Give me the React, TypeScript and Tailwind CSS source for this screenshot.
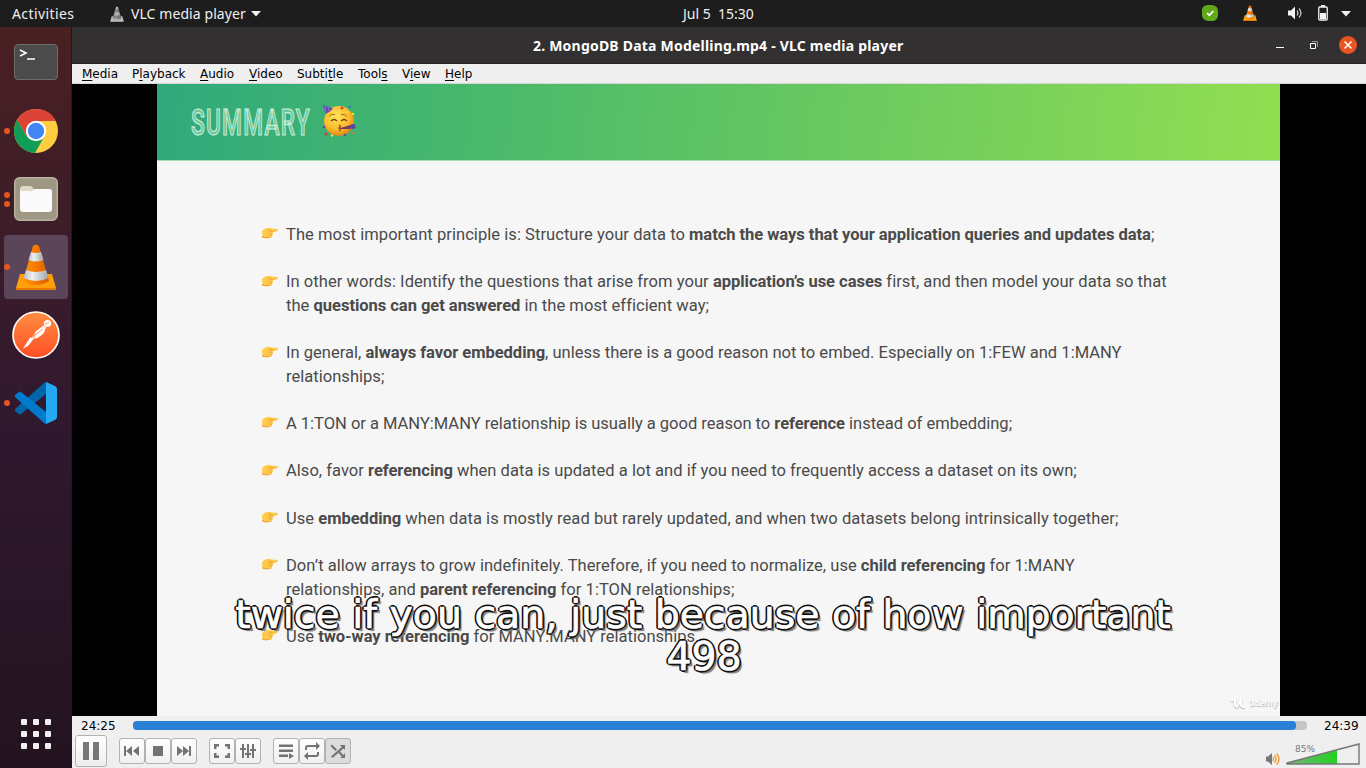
import React from "react";

const menu: [string, string, string][] = [
  ["", "M", "edia"], ["P", "l", "ayback"], ["", "A", "udio"], ["", "V", "ideo"],
  ["Subti", "t", "le"], ["Tool", "s", ""], ["V", "i", "ew"], ["", "H", "elp"],
];
const menuWidths = ["w-[50px]", "w-[68px]", "w-[49px]", "w-[48px]", "w-[61px]", "w-[44px]", "w-[43px]", "w-[40px]"];

function Cone({ gray = false, className }: { gray?: boolean; className: string }) {
  const o = gray ? "#b5b5b5" : "#f57900";
  const d = gray ? "#858585" : "#d85c00";
  return (
    <svg viewBox="0 0 42 48" className={className}>
      <defs>
        <linearGradient id={gray ? "cg" : "co"} x1="0" x2="1"><stop offset="0" stopColor={gray ? "#999" : "#ff9800"} /><stop offset=".5" stopColor={o} /><stop offset="1" stopColor={d} /></linearGradient>
        <linearGradient id={gray ? "wg" : "wo"} x1="0" x2="1"><stop offset="0" stopColor={gray ? "#777" : "#b9bdc0"} /><stop offset=".35" stopColor={gray ? "#888" : "#eef0f1"} /><stop offset="1" stopColor={gray ? "#666" : "#a2a6a8"} /></linearGradient>
      </defs>
      <path d="M5 31h32l4 14v2H1v-2z" fill={gray ? "#bbb" : "#ff9f0a"} />
      <path d="M1 45h40v2H1z" fill={gray ? "#999" : "#e87800"} />
      <path d="M18 3Q21 0 24 3L34 38Q21 46 8 38z" fill={gray ? "url(#cg)" : "url(#co)"} />
      <path d="M16 9Q21 11 26 9L28.5 17Q21 20 13.500 17z" fill={gray ? "url(#wg)" : "url(#wo)"} />
      <path d="M11 27Q21 31 31 27L33.500 35Q21 41 8.500 35z" fill={gray ? "url(#wg)" : "url(#wo)"} />
    </svg>
  );
}

function Hand() {
  return (
    <svg viewBox="0 0 18 14" className="h-[14px] w-[18px] shrink-0">
      <path d="M1 5C3 3.500 5 2 7 1.800L10.500 2.600l6 .5q1.300 1-.2 2l-4.600.8.4 1.600-.7 1.900-1.100 1.700-4.300.9L1.500 11z" fill="#ffc94a" />
      <path d="M1 10l4 1.300 5-.2 1-1-.6 1.500-5 .9-4-.8zM9.500 3.200l-2.500 2 4 .5 5.500-.6-6-.4z" fill="#eda636" />
      <path d="M7.500 7.200h4M7.500 9.200h3.500" stroke="#e0a134" strokeWidth=".6" />
    </svg>
  );
}

function Party() {
  return (
    <svg viewBox="0 0 34 34" className="relative -top-px h-[34px] w-[34px]">
      <defs><radialGradient id="face" cx=".42" cy=".35" r=".65"><stop offset="0" stopColor="#ffe45a" /><stop offset=".65" stopColor="#fdbb2c" /><stop offset="1" stopColor="#e38613" /></radialGradient></defs>
      <circle cx="17" cy="17" r="15" fill="url(#face)" />
      <path d="M1 1l10 3.500Q8 8 3.500 10z" fill="#6747b5" /><path d="M3 2l1 7M6 3l1 4" stroke="#9a79dd" strokeWidth=".8" />
      <path d="M7 12.500q2-3 6-2M19 10.500q4-1 6 2" stroke="#a86a18" fill="none" strokeWidth="1" />
      <path d="M9 17q3-3 6 0M19 17q3-3 6 0" stroke="#6e4010" fill="none" strokeWidth="1.200" />
      <path d="M17 21q3 1 0 3q3 1 0 3" stroke="#84420d" fill="none" strokeWidth="1.200" />
      <path d="M18 24l11-3v4l-11 0z" fill="#713d66" /><circle cx="31" cy="22.500" r="2.500" fill="#5a48a5" />
      <circle cx="20" cy="4" r="1.500" fill="#e83c47" /><circle cx="28" cy="3" r="1.200" fill="#3275c9" /><circle cx="31" cy="10" r="1.300" fill="#e5dc35" /><circle cx="25" cy="8" r="1" fill="#efda51" />
      <circle cx="2" cy="23" r="1.300" fill="#6046a9" /><circle cx="4" cy="30" r="1.500" fill="#dc3448" /><circle cx="10" cy="31.500" r="1.200" fill="#f2da44" /><circle cx="23" cy="31" r="1.300" fill="#5c51a8" /><circle cx="30" cy="29" r="1.200" fill="#f26747" />
    </svg>
  );
}

function Dock({ dots = 0, active = false, children }: { dots?: number; active?: boolean; children: React.ReactNode }) {
  return (
    <div className={`relative ml-1 mt-1 flex h-16 w-16 shrink-0 items-center justify-center rounded-[4px] ${active ? "bg-[#5a4658]" : ""}`}>
      <div className="absolute left-0 top-0 flex h-16 w-[6px] flex-col items-center justify-center gap-[3px]">
        {Array.from({ length: dots }).map((_, i) => <i key={i} className="h-[6px] w-[6px] rounded-full bg-[#e95420]" />)}
      </div>
      {children}
    </div>
  );
}

function Btn({ on = false, children }: { on?: boolean; children: React.ReactNode }) {
  return (
    <button className={`flex h-[26px] w-[26px] items-center justify-center rounded-[3px] border border-[#b2b2b2] ${on ? "bg-[#dcdcdc]" : "bg-linear-to-b from-[#fefefe] to-[#f0f0f0]"}`}>
      <svg viewBox="0 0 18 18" className="h-[18px] w-[18px] shrink-0" fill="#737373">{children}</svg>
    </button>
  );
}

function B({ children }: { children: React.ReactNode }) {
  return <b className="font-bold tracking-[-0.045px]">{children}</b>;
}

function Item({ lines }: { lines: React.ReactNode[] }) {
  return (
    <div className="mb-[23.650px] flex">
      <div className="mr-[7px] flex h-[23.650px] items-center pb-[3px]"><Hand /></div>
      <div>{lines.map((l, i) => <p key={i} className="h-[23.650px] whitespace-nowrap leading-[23.650px]">{l}</p>)}</div>
    </div>
  );
}

const items: React.ReactNode[][] = [
  [<>The most important principle is: Structure your data to <B>match the ways that your application queries and updates data</B>;</>],
  [<>In other words: Identify the questions that arise from your <B>application’s use cases</B> first, and then model your data so that</>, <>the <B>questions can get answered</B> in the most efficient way;</>],
  [<>In general, <B>always favor embedding</B>, unless there is a good reason not to embed. Especially on 1:FEW and 1:MANY</>, <>relationships;</>],
  [<>A 1:TON or a MANY:MANY relationship is usually a good reason to <B>reference</B> instead of embedding;</>],
  [<>Also, favor <B>referencing</B> when data is updated a lot and if you need to frequently access a dataset on its own;</>],
  [<>Use <B>embedding</B> when data is mostly read but rarely updated, and when two datasets belong intrinsically together;</>],
  [<>Don’t allow arrays to grow indefinitely. Therefore, if you need to normalize, use <B>child referencing</B> for 1:MANY</>, <>relationships, and <B>parent referencing</B> for 1:TON relationships;</>],
  [<>Use <B>two-way referencing</B> for MANY:MANY relationships.</>],
];
const itemTracking = ["tracking-[0.045px]", "tracking-[0.045px]", "tracking-[0.015px]", "tracking-[-0.020px]", "tracking-[0.025px]", "tracking-[0.050px]", "tracking-[0.025px]", "tracking-[0.005px]"];

export default function App() {
  return (
    <div className="flex h-[768px] w-[1366px] flex-col overflow-hidden bg-black font-['Noto_Sans',sans-serif]">
      <header className="flex h-[27px] shrink-0 items-center bg-[#1d1d1d] text-[14px] text-[#f0f0f0]">
        <span className="ml-3 w-[97px] whitespace-nowrap tracking-[0.400px]">Activities</span>
        <Cone gray className="h-[16px] w-[16px]" />
        <span className="ml-[6px] w-[120px] whitespace-nowrap tracking-[0.080px]">VLC media player</span>
        <svg viewBox="0 0 10 6" className="h-[6px] w-[10px]" fill="#f0f0f0"><path d="M0 0h10L5 5.500z" /></svg>
        <span className="ml-[422px] w-[519px] whitespace-pre pb-px text-[14px]">Jul 5  15:30</span>
        <svg viewBox="0 0 16 16" className="-mt-px h-4 w-4"><path d="M5 0h5q6 1 6 6v5q-1 5-6 5H6q-6-1-6-6V5q0-4 5-5z" fill="#5fa81a" /><path d="M5 8l2.300 2.300L11.500 6" fill="none" stroke="#fff" strokeWidth="1.700" /></svg>
        <Cone className="ml-[24px] h-[16px] w-[16px] -mt-px" />
        <svg viewBox="0 0 16 14" className="ml-[30px] h-[14px] w-[16px] -mt-px"><path d="M0 4.500h3l4-4v13l-4-4H0z" fill="#f2f2f2" /><path d="M9 4.500q2 2.500 0 5M11 2.500q4 4.500 0 9" stroke="#ccc" fill="none" strokeWidth="1.200" /></svg>
        <svg viewBox="0 0 10 16" className="ml-[14px] h-4 w-[10px] -mt-px"><path d="M3 0h4v2H3z" fill="#f2f2f2" /><rect x=".75" y="2" width="8.500" height="13" rx="1" fill="none" stroke="#f2f2f2" strokeWidth="1.300" /><path d="M2 8h6v6H2z" fill="#f2f2f2" /></svg>
        <svg viewBox="0 0 10 6" className="ml-[13px] h-[6px] w-[10px]" fill="#f0f0f0"><path d="M0 0h10L5 5.500z" /></svg>
      </header>
      <div className="flex h-[741px]">
        <aside className="flex w-[72px] shrink-0 flex-col border-r border-[#26131f] bg-linear-to-b from-[#4a2021] via-[#2f182e] via-55% to-[#23131f]">
          <Dock>
            <div className="flex h-9 w-11 -translate-y-px items-start rounded-[4px] border border-[#6c6c6c] bg-[#4b4b4b]">
              <svg viewBox="0 0 42 34" className="h-[34px] w-[42px]" fill="none" stroke="#fff" strokeWidth="1.600"><path d="M5 5l6 3-6 3M12 14h8" /></svg>
            </div>
          </Dock>
          <Dock dots={1}>
            <svg viewBox="0 0 44 44" className="h-11 w-11"><circle cx="22" cy="22" r="22" fill="#ffcd40" /><path d="M22 12h19.600L39 8q-5-8-17-8Q10 0 3 11l10 17z" fill="#db4437" /><path d="M3 11l10 17 9 3 8-3-9 16A22 22 0 0 1 3 11z" fill="#109d58" /><circle cx="22" cy="22" r="10.200" fill="#fff" /><circle cx="22" cy="22" r="8.200" fill="#4285f4" /></svg>
          </Dock>
          <Dock dots={2}>
            <svg viewBox="0 0 44 44" className="h-11 w-11"><rect x=".7" y=".7" width="42.600" height="42.600" rx="5" fill="#9e9783" stroke="#bab49f" strokeWidth="1.400" /><path d="M6 12q0-3 3-3h8l3 3h15q3 0 3 3v5H6z" fill="#ddd9c9" /><path d="M6 14h12l3-2h14q3 0 3 3v17q0 3-3 3H9q-3 0-3-3z" fill="#fafafa" /></svg>
          </Dock>
          <Dock dots={1} active><Cone className="h-[48px] w-[42px]" /></Dock>
          <Dock>
            <svg viewBox="0 0 48 48" className="h-12 w-12"><defs><linearGradient id="pm" x2="0" y2="1"><stop stopColor="#ff8e42" /><stop offset="1" stopColor="#ff4e25" /></linearGradient></defs><circle cx="24" cy="24" r="23" fill="url(#pm)" stroke="#fff" strokeWidth="1.700" /><circle cx="35.500" cy="12.500" r="3.600" fill="#fff" /><path d="M31.500 14.500l2.500 2-2.500 6-6 4.500-6.500 1.500L23 21zM18.500 26l3.500 1.500-6 7.500-5 2.500 2-3z" fill="#fff" /><path d="M19 27l12-9M23 21l-1 7M33 13l4-1.500" stroke="#ff763b" strokeWidth=".8" /></svg>
          </Dock>
          <Dock dots={1}>
            <svg viewBox="0 0 42 42" className="h-[42px] w-[42px]"><path d="M0 27l29-26 2-1v12L6 32q-1 1-2 0l-4-3q-1-1 0-2z" fill="#0065a9" /><path d="M0 15l29 26 2 1V30L6 10q-1-1-2 0l-4 3q-1 1 0 2z" fill="#007acc" /><path d="M31 0l9 4q2 1 2 3v28q0 2-2 3l-9 4z" fill="#24a9f2" /></svg>
          </Dock>
          <div className="ml-[21px] mt-[284px] grid w-[30px] grid-cols-3 gap-[6px]">
            {Array.from({ length: 9 }).map((_, i) => <i key={i} className="h-[6px] w-[6px] rounded-[1px] bg-[#f2f0ee]" />)}
          </div>
        </aside>
        <main className="flex w-[1294px] flex-col bg-[#efefef]">
          <div className="flex h-[37px] shrink-0 items-center border-b border-[#252323] bg-[#323031] text-white">
            <h1 className="ml-[461px] w-[742px] whitespace-nowrap pt-px text-[14px] font-bold tracking-[0.210px]">2. MongoDB Data Modelling.mp4 - VLC media player</h1>
            <svg viewBox="0 0 82 18" className="h-[18px] w-[82px]"><path d="M1 11.500h8" stroke="#fff" /><path d="M35.500 7.500h5v5h-5z" fill="none" stroke="#fff" /><path d="M37 5.500h5.500V11" fill="none" stroke="#999" /><circle cx="73" cy="9" r="9" fill="#e95420" /><path d="M69.500 5.500l7 7m0-7l-7 7" stroke="#fff" strokeWidth="1.500" /></svg>
          </div>
          <nav className="flex h-5 shrink-0 items-center border-b border-[#d6d6d6] pl-[10px] font-['DejaVu_Sans',sans-serif] text-[12px] text-black">
            {menu.map((m, i) => <span key={i} className={`${menuWidths[i]} whitespace-nowrap`}>{m[0]}<u className="underline-offset-2">{m[1]}</u>{m[2]}</span>)}
          </nav>
          <div className="h-[632px] shrink-0 bg-black pl-[85px] pr-[86px]">
            <section className="relative h-[632px] bg-[#f6f6f6]">
              <div className="flex h-[77px] items-center border-b border-[#a9dfb5] bg-[linear-gradient(97deg,#30a97c,#48b86c_28%,#92de51)] pl-[33px]">
                <svg viewBox="0 0 120 40" className="mr-[12px] h-[40px] w-[120px] overflow-visible"><text x="1" y="32.500" textLength="120" lengthAdjust="spacingAndGlyphs" className="fill-[#6cc89d] stroke-[#cdeedb] stroke-[1.2px] font-['Roboto',sans-serif] text-[36px] font-medium tracking-[2px]">SUMMARY</text></svg>
                <Party />
              </div>
              <div className="pl-[104px] pt-[62px] font-['Roboto',sans-serif] text-[16.550px] text-[#4a4a4a]">
                {items.map((l, i) => <div key={i} className={itemTracking[i]}><Item lines={l} /></div>)}
              </div>
              <div className="absolute left-0 top-[509px] w-[1092px] whitespace-nowrap text-center font-['DejaVu_Sans',sans-serif] text-[39.400px] leading-[42px] text-white [-webkit-text-stroke:0.700px_#fff] [text-shadow:2px_0_0_#111,-2px_0_0_#111,0_2px_0_#111,0_-2px_0_#111,1.400px_1.400px_0_#111,-1.400px_1.400px_0_#111,1.400px_-1.400px_0_#111,-1.400px_-1.400px_0_#111,3px_3px_1px_#777]">
                <p>twice if you can, just because of how important</p><p className="pl-[2px]">498</p>
              </div>
              <div className="absolute bottom-[6px] right-[3px] flex items-center gap-[2px] text-[9px] font-bold text-[#fafafa] [text-shadow:1px_1px_1px_#bbb]">
                <svg viewBox="0 0 16 14" className="h-[14px] w-4"><path d="M1 6q4-4 4 0v4q2 5 6-7v6q0 3 4 3" stroke="#ccc" strokeWidth="3" fill="none" /><path d="M1 5q4-4 4 0v4q2 5 6-7v6q0 3 4 3" stroke="#fff" strokeWidth="2" fill="none" /></svg><span className="tracking-[-0.600px]">Udemy</span>
              </div>
            </section>
          </div>
          <footer className="h-[52px] font-['DejaVu_Sans',sans-serif] text-[12px] text-black">
            <div className="flex h-[18px] items-center pl-[9px]">
              <span className="w-[52px] pt-[2px]">24:25</span>
              <div className="h-[9px] w-[1174px] rounded-[4px] bg-[#c6c6c6]"><div className="h-full w-[1163px] rounded-[4px] bg-[#2980d4]" /></div>
              <span className="ml-[17px] pt-[2px]">24:39</span>
            </div>
            <div className="flex h-[34px] items-center pl-[3px]">
              <button className="flex h-8 w-8 items-center justify-center gap-1 rounded-[3px] border border-[#b2b2b2] bg-linear-to-b from-white to-[#eeeeee]"><i className="h-[18px] w-[6px] bg-[#777]" /><i className="h-[18px] w-[6px] bg-[#777]" /></button>
              <div className="ml-3 flex">
                <Btn><path d="M1 4h2v10H1zM9 4v10L3 9zM16 4v10l-6-5z" /></Btn><Btn><path d="M4 4h10v10H4z" /></Btn><Btn><path d="M14 4h2v10h-2zM8 4v10l6-5zM2 4v10l6-5z" /></Btn>
              </div>
              <div className="ml-3 flex">
                <Btn><path d="M1 2h5v2.500H3.500V7H1zM12 2h5v5h-2.500V4.500H12zM1 11h2.500v2.500H6V16H1zM14.500 11H17v5h-5v-2.500h2.500z" /></Btn><Btn><path d="M3 2h2v4h2v2H5v8H3V8H1V6h2zM8 2h2v9h2v2h-2v3H8v-3H6v-2h2zM13 2h2v5h2v2h-2v7h-2V9h-2V7h2z" /></Btn>
              </div>
              <div className="ml-3 flex">
                <Btn><path d="M2 2.500h14V5H2zM2 7.500h14V10H2zM2 12.500h9V15H2zM12 11l5 3-5 3z" /></Btn>
                <Btn><path d="M2 8V6q0-3 3-3h8V0l4 4-4 4V5H5q-1 0-1 1v2zM16 10v2q0 3-3 3H5v3l-4-4 4-4v3h8q1 0 1-1v-2z" /></Btn>
                <Btn on><path d="M3 2.500l5 5L6.500 9l-5-5zM11 3h5v5l-1.600-1.600L3.500 16 2 14.500 12.800 5zM11 9.500l3.500 3.500L16 11v5h-5l1.800-1.500L9.500 11z" /></Btn>
              </div>
              <div className="ml-auto flex h-[34px] items-end pb-[2px]">
                <svg viewBox="0 0 15 14" className="mr-[5px] h-[14px] w-[15px]"><path d="M0 4.500h2l4-3.500v12L2 9.500H0z" fill="#777" /><path d="M7 5q1 2 0 4M8.500 3.500q3 3.500 0 7M10.500 1.500q5 5.500 0 11" fill="none" stroke="#f29b2e" strokeWidth="1.400" /></svg>
                <div className="relative mr-[6px] h-[23px] w-[74px]"><span className="absolute left-[9px] top-0 text-[9px] text-[#777]">85%</span><svg viewBox="0 0 74 23" className="h-[23px] w-[74px]"><defs><linearGradient id="vol"><stop stopColor="#78b878" /><stop offset="1" stopColor="#20d020" /></linearGradient></defs><path d="M1 20L51 7v14H1z" fill="url(#vol)" /><path d="M1 20L73 1v20H1z" fill="none" stroke="#777" strokeWidth="1.400" /></svg></div>
              </div>
            </div>
          </footer>
        </main>
      </div>
    </div>
  );
}
